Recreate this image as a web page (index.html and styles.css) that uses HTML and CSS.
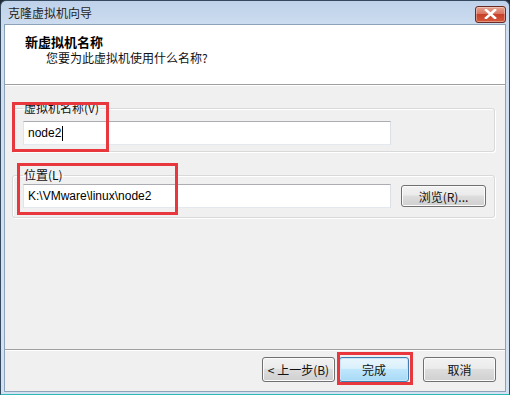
FILE: index.html
```html
<!DOCTYPE html>
<html lang="zh-CN">
<head>
<meta charset="utf-8">
<title>克隆虚拟机向导</title>
<link rel="stylesheet" href="styles.css">
</head>
<body>
<div class="window">
  <div class="titlebar">
    <span class="title">克隆虚拟机向导</span>
    <div class="close">
      <svg width="13" height="10" viewBox="0 0 13 10"><path d="M2 1 L11 9 M11 1 L2 9" stroke="#fff" stroke-width="2.6" stroke-linecap="square" fill="none"/></svg>
    </div>
  </div>
  <div class="client">
    <div class="header">
      <div class="h-title">新虚拟机名称</div>
      <div class="h-sub">您要为此虚拟机使用什么名称?</div>
    </div>
    <div class="content">
      <fieldset class="group g1">
        <legend>虚拟机名称(V)</legend>
        <div class="row">
          <div class="textbox">node2<span class="caret"></span></div>
        </div>
      </fieldset>
      <fieldset class="group g2">
        <legend>位置(L)</legend>
        <div class="row">
          <div class="textbox">K:\VMware\linux\node2</div>
          <div class="btn browse">浏览(R)...</div>
        </div>
      </fieldset>
    </div>
    <div class="footer">
      <div class="btn back">&lt; 上一步(B)</div>
      <div class="btn finish">完成</div>
      <div class="btn cancel">取消</div>
    </div>
  </div>
  <div class="mark m1"></div>
  <div class="mark m2"></div>
  <div class="mark m3"></div>
</div>
</body>
</html>
```
FILE: styles.css
```css
* { box-sizing: border-box; }
html, body { margin: 0; padding: 0; background: #1f2a36; }
body {
  font-family: "Noto Sans CJK SC", "Noto Sans", sans-serif;
  font-size: 12px;
  color: #000;
}
.window {
  position: relative;
  width: 510px;
  height: 395px;
  border: 1px solid #34485e;
  border-bottom-color: #2fb8b8;
  border-radius: 6px 6px 0 0;
  background: linear-gradient(#bfd2ea, #cfdff1 30px, #d3e2f2);
  display: flex;
  flex-direction: column;
}
.titlebar {
  height: 23px;
  display: flex;
  align-items: center;
  justify-content: space-between;
  padding: 0 3px 0 7px;
}
.title {
  font-size: 12px;
  line-height: 14px;
  color: #1e1e1e;
  margin-top: 1px;
}
.close {
  width: 31px;
  height: 17px;
  margin-top: 3px;
  border: 1px solid #6b2a22;
  border-radius: 3px;
  background: linear-gradient(#e8a493, #d97560 45%, #c6402a 50%, #d55a3a 100%);
  display: flex;
  align-items: center;
  justify-content: center;
  box-shadow: inset 0 0 0 1px rgba(255,255,255,0.35);
}
.client {
  flex: 1;
  margin: 0 3px 2px 3px;
  border: 1px solid #8da2ba;
  background: #f0f0f0;
  display: flex;
  flex-direction: column;
}
.header {
  height: 60px;
  background: #fff;
  border-bottom: 1px solid #a0a0a0;
  box-shadow: 0 1px 0 #fff;
  padding: 9px 0 0 20px;
}
.h-title {
  font-weight: bold;
  font-size: 13px;
  line-height: 16px;
}
.h-sub {
  margin-left: 21px;
  line-height: 16px;
  color: #111;
}
.content {
  flex: 1;
  padding: 16px 10px 0 7px;
  display: flex;
  flex-direction: column;
  gap: 16px;
}
.group {
  margin: 0;
  min-width: 0;
  border: 1px solid #d9d9d9;
  border-radius: 3px;
  box-shadow: inset 1px 1px 0 #fff, 1px 1px 0 #fff;
  padding: 6px 0 6px 10px;
}
.group.g2 { padding: 2px 0 9px 10px; }
.group legend {
  padding: 0 1px;
  margin-left: 0;
  line-height: 14px;
  font-size: 12px;
  color: #111;
}
.row {
  display: flex;
  align-items: center;
}
.textbox {
  width: 368px;
  height: 24px;
  background: #fff;
  border: 1px solid;
  border-color: #abadb3 #dbdfe6 #e3e9ef #e2e3ea;
  padding: 0 4px;
  display: flex;
  align-items: center;
  font-family: "Liberation Sans", Arial, sans-serif;
  font-size: 12px;
  color: #000;
}
.caret {
  display: inline-block;
  width: 1px;
  height: 15px;
  background: #000;
  margin-left: 1px;
}
.btn {
  height: 23px;
  border: 1px solid #707070;
  border-radius: 3px;
  background: linear-gradient(#f2f2f2, #ebebeb 45%, #dddddd 50%, #cfcfcf);
  box-shadow: inset 0 0 0 1px #fbfbfb;
  display: flex;
  align-items: center;
  justify-content: center;
  font-size: 12px;
  color: #111;
}
.browse {
  width: 85px;
  height: 22px;
  margin-left: 10px;
}
.footer {
  height: 42px;
  border-top: 1px solid #a0a0a0;
  box-shadow: inset 0 1px 0 #fff;
  display: flex;
  justify-content: flex-end;
  align-items: flex-start;
  padding: 7px 9px 0 0;
  gap: 4px;
}
.footer .btn { height: 25px; }
.back { width: 73px; }
.finish {
  width: 70px;
  border-color: #3c7fb1;
  background: linear-gradient(#eaf6fd, #d9f0fc 45%, #bee6fd 50%, #a7d9f5);
  box-shadow: inset 0 0 0 1px #c8e6f7;
}
.cancel { width: 73px; margin-left: 10px; }
.mark {
  position: absolute;
  border: 3px solid #e8383d;
}
.m1 { left: 11px; top: 101px; width: 97px; height: 50px; }
.m2 { left: 16px; top: 162px; width: 161px; height: 52px; }
.m3 { left: 336px; top: 351px; width: 76px; height: 33px; }
```
